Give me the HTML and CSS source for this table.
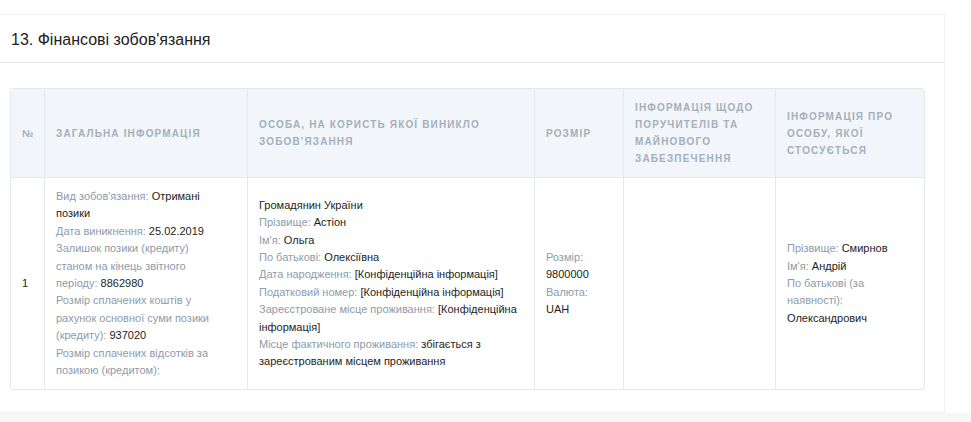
FILE: index.html
```html
<!DOCTYPE html>
<html lang="uk">
<head>
<meta charset="utf-8">
<link rel="stylesheet" href="styles.css">
</head>
<body>
<section class="card">
  <header class="card-head">13. Фінансові зобов'язання</header>
  <div class="card-body">
    <table class="tbl">
      <thead>
        <tr>
          <th class="c-num">№</th>
          <th class="c-gen">Загальна інформація</th>
          <th class="c-person">Особа, на користь якої виникло зобов'язання</th>
          <th class="c-size">Розмір</th>
          <th class="c-guar">Інформація щодо поручителів та майнового забезпечення</th>
          <th class="c-rel">Інформація про особу, якої стосується</th>
        </tr>
      </thead>
      <tbody>
        <tr>
          <td class="c-num">1</td>
          <td class="c-gen"><div class="w-gen">
            <span class="lbl">Вид зобов'язання:</span> <span class="val">Отримані позики</span><br>
            <span class="lbl">Дата виникнення:</span> <span class="val">25.02.2019</span><br>
            <span class="lbl">Залишок позики (кредиту) станом на кінець звітного періоду:</span> <span class="val">8862980</span><br>
            <span class="lbl">Розмір сплачених коштів у рахунок основної суми позики (кредиту):</span> <span class="val">937020</span><br>
            <span class="lbl">Розмір сплачених відсотків за позикою (кредитом):</span>
          </div></td>
          <td class="c-person"><div class="w-person">
            <span class="val">Громадянин України</span><br>
            <span class="lbl">Прізвище:</span> <span class="val">Астіон</span><br>
            <span class="lbl">Ім'я:</span> <span class="val">Ольга</span><br>
            <span class="lbl">По батькові:</span> <span class="val">Олексіївна</span><br>
            <span class="lbl">Дата народження:</span> <span class="val">[Конфіденційна інформація]</span><br>
            <span class="lbl">Податковий номер:</span> <span class="val">[Конфіденційна інформація]</span><br>
            <span class="lbl">Зареєстроване місце проживання:</span> <span class="val">[Конфіденційна інформація]</span><br>
            <span class="lbl">Місце фактичного проживання:</span> <span class="val">збігається з зареєстрованим місцем проживання</span>
          </div></td>
          <td class="c-size"><div class="w-size">
            <span class="lbl">Розмір:</span> <span class="val">9800000</span><br>
            <span class="lbl">Валюта:</span> <span class="val">UAH</span>
          </div></td>
          <td class="c-guar"></td>
          <td class="c-rel"><div class="w-rel">
            <span class="lbl">Прізвище:</span> <span class="val">Смирнов</span><br>
            <span class="lbl">Ім'я:</span> <span class="val">Андрій</span><br>
            <span class="lbl">По батькові (за наявності):</span> <span class="val">Олександрович</span>
          </div></td>
        </tr>
      </tbody>
    </table>
  </div>
</section>
<div class="next"></div>
</body>
</html>
```

FILE: styles.css
```css
html, body {
  margin: 0;
  padding: 0;
  background: #ffffff;
  font-family: "Liberation Sans", Arial, sans-serif;
}

body {
  padding-top: 14px;
}

.card {
  width: 945px;
  height: 399px;
  box-sizing: border-box;
  border: 1px solid #f1f1f1;
  border-left: none;
  background: #fff;
}

.card-head {
  height: 48px;
  box-sizing: border-box;
  padding: 16px 11px 0;
  font-size: 16px;
  color: #222;
  border-bottom: 1px solid #e6e6e6;
}

.card-body {
  padding: 25px 19px 0 10px;
}

.tbl {
  width: 915px;
  box-sizing: border-box;
  border-collapse: separate;
  border-spacing: 0;
  border: 1px solid #e4e9ee;
  border-radius: 3px;
  table-layout: fixed;
}

.tbl th,
.tbl td {
  border-left: 1px solid #e4e9ee;
  text-align: left;
  padding: 10px 11px;
}

.tbl th:first-child,
.tbl td:first-child {
  border-left: none;
}

.tbl th {
  background: #f2f6fa;
  color: #a5afbc;
  font-size: 10px;
  font-weight: bold;
  letter-spacing: 1.15px;
  text-transform: uppercase;
  line-height: 17px;
  height: 66px;
  vertical-align: middle;
  border-bottom: 1px solid #e4e9ee;
}

.tbl td {
  font-size: 11px;
  line-height: 17.4px;
  height: 190px;
  vertical-align: middle;
}

.c-num { width: 11px; }
.c-gen { width: 180px; }
.c-person { width: 264px; }
.c-size { width: 66px; }
.c-guar { width: 129px; }
.c-rel { width: 126px; }

.w-gen { width: 160px; }
.w-rel { width: 125px; }

.lbl { color: #8d9bab; }
.val { color: #1d1d1d; }

.tbl td.c-num { color: #1d1d1d; }

.next {
  height: 9px;
  background: #f7f7f7;
}
```
